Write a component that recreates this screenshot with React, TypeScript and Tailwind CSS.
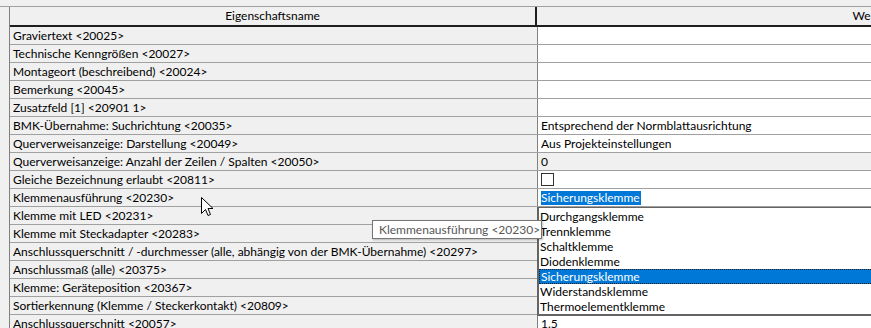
import React from "react";

const rows: { name: string; value?: string; kind?: "gray" | "check" | "combo" }[] = [
  { name: "Graviertext <20025>" },
  { name: "Technische Kenngrößen <20027>" },
  { name: "Montageort (beschreibend) <20024>" },
  { name: "Bemerkung <20045>" },
  { name: "Zusatzfeld [1] <20901 1>" },
  { name: "BMK-Übernahme: Suchrichtung <20035>", value: "Entsprechend der Normblattausrichtung" },
  { name: "Querverweisanzeige: Darstellung <20049>", value: "Aus Projekteinstellungen" },
  { name: "Querverweisanzeige: Anzahl der Zeilen / Spalten <20050>", value: "0", kind: "gray" },
  { name: "Gleiche Bezeichnung erlaubt <20811>", kind: "check" },
  { name: "Klemmenausführung <20230>", kind: "combo" },
  { name: "Klemme mit LED <20231>" },
  { name: "Klemme mit Steckadapter <20283>" },
  { name: "Anschlussquerschnitt / -durchmesser (alle, abhängig von der BMK-Übernahme) <20297>" },
  { name: "Anschlussmaß (alle) <20375>" },
  { name: "Klemme: Geräteposition <20367>" },
  { name: "Sortierkennung (Klemme / Steckerkontakt) <20809>" },
  { name: "Anschlussquerschnitt <20057>", value: "1.5" },
];

const options = [
  "Durchgangsklemme",
  "Trennklemme",
  "Schaltklemme",
  "Diodenklemme",
  "Sicherungsklemme",
  "Widerstandsklemme",
  "Thermoelementklemme",
];

export default function App() {
  return (
    <div
      className="relative w-[871px] h-[328px] overflow-hidden bg-[#f0f0f0] text-[12px] text-black"
      style={{ fontFamily: 'Lato, "Noto Sans", "Liberation Sans", sans-serif' }}
    >
      <div className="h-[7px] border-b border-[#a0a0a0]" />
      <div className="ml-[9px] w-[1200px] border-l border-[#808080]">
        <div className="flex h-[20px] border-b-2 border-[#1e1e1e]">
          <div className="w-[527px] border-r-2 border-[#1e1e1e] flex items-center justify-center leading-none">
            Eigenschaftsname
          </div>
          <div className="w-[658px] flex items-center justify-center leading-none">Wert</div>
        </div>
        {rows.map((r, i) => (
          <div key={i} className="flex h-[18px] border-b border-[#a0a0a0]">
            <div className="w-[528px] shrink-0 border-r border-[#808080] pl-[3px] flex items-center leading-none whitespace-nowrap">
              {r.name}
            </div>
            <div
              className={`flex-1 pl-[3px] flex items-center leading-none whitespace-nowrap ${
                r.kind === "gray" ? "bg-[#f0f0f0]" : "bg-white"
              }`}
            >
              {r.kind === "check" ? (
                <div className="w-[13px] h-[13px] border border-[#333333] bg-white" />
              ) : r.kind === "combo" ? (
                <span className="bg-[#0078d7] text-white h-[14px] flex items-center pr-[1px]">Sicherungsklemme</span>
              ) : (
                r.value
              )}
            </div>
          </div>
        ))}
      </div>

      {/* Dropdown list */}
      <div className="absolute left-[537px] top-[207px] w-[400px] bg-white border-l-2 border-b-2 border-t border-[#646464] pt-[1px]">
        {options.map((o) => (
          <div
            key={o}
            className={`h-[15px] pl-[1px] flex items-center leading-none whitespace-nowrap ${
              o === "Sicherungsklemme"
                ? "bg-[#0078d7] text-white border border-dotted border-[#1e1e1e]"
                : ""
            }`}
          >
            {o}
          </div>
        ))}
      </div>

      {/* Tooltip */}
      <div className="absolute left-[372px] top-[220px] h-[19px] bg-white border border-[#767676] text-[#575757] pl-[6px] pr-[1px] flex items-center leading-none whitespace-nowrap shadow-[1px_1px_2px_rgba(0,0,0,0.25)]">
        Klemmenausführung &lt;20230&gt;
      </div>

      {/* Mouse cursor */}
      <svg className="absolute left-[201px] top-[197px]" width="13" height="21" viewBox="0 0 13 21">
        <path
          d="M0.5 0.5 L0.5 16.5 L4.5 12.5 L7 18.5 L9.5 17.5 L7 11.5 L12 11.5 Z"
          fill="white"
          stroke="black"
          strokeWidth="1"
          strokeLinejoin="miter"
        />
      </svg>
    </div>
  );
}
